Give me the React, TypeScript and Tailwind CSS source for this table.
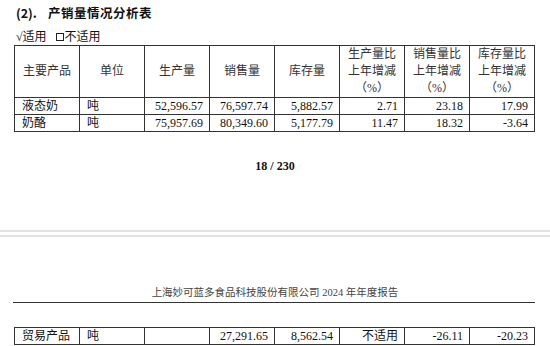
import React from 'react';

const serif = "font-['Liberation_Serif','Noto_Sans_CJK_SC',serif]";

const rows = [
  ['液态奶', '吨', '52,596.57', '76,597.74', '5,882.57', '2.71', '23.18', '17.99'],
  ['奶酪', '吨', '75,957.69', '80,349.60', '5,177.79', '11.47', '18.32', '-3.64'],
];

const cell = 'border border-[#333] text-[12px] leading-[15px] h-[17px] p-0 text-[#111]';

const DataRow: React.FC<{ r: string[] }> = ({ r }) => (
  <tr>
    {r.map((v, i) => (
      <td key={i} className={`${cell} ${i < 2 ? 'text-left pl-[7px]' : 'text-right pr-[6px]'}`}>
        {v}
      </td>
    ))}
  </tr>
);

const Head: React.FC<{ lines: string[] }> = ({ lines }) => (
  <th className="border border-[#333] h-[48px] p-0 font-normal text-[12px] leading-[17px] text-[#333] text-center">
    {lines.map((l, i) => (
      <div key={i}>{l}</div>
    ))}
  </th>
);

const Cols = () => (
  <colgroup>
    {Array.from({ length: 8 }).map((_, i) => (
      <col key={i} className="w-[65px]" />
    ))}
  </colgroup>
);

export default function App() {
  return (
    <div className={`w-[550px] h-[346px] bg-white overflow-hidden ${serif} text-black`}>
      <div className="pt-[4px] pl-[16px] h-[22px] flex text-[12.5px] leading-[18px] font-bold font-['Noto_Sans_CJK_SC',sans-serif] text-[#111]">
        <span className="w-[32px]">(2).</span>
        <span className="tracking-[0.5px]">产销量情况分析表</span>
      </div>
      <div className="mt-[7px] pl-[16px] h-[16px] flex items-center text-[12px] leading-[16px] text-[#111]">
        <span>√适用</span>
        <span className="ml-[9px] mr-[1px] inline-block w-[8px] h-[8px] border border-[#222]" />
        <span>不适用</span>
      </div>

      <table className="ml-[14px] w-[521px] table-fixed border-collapse">
        <Cols />
        <thead>
          <tr>
            <Head lines={['主要产品']} />
            <Head lines={['单位']} />
            <Head lines={['生产量']} />
            <Head lines={['销售量']} />
            <Head lines={['库存量']} />
            <Head lines={['生产量比', '上年增减', '（%）']} />
            <Head lines={['销售量比', '上年增减', '（%）']} />
            <Head lines={['库存量比', '上年增减', '（%）']} />
          </tr>
        </thead>
        <tbody>
          {rows.map((r, i) => (
            <DataRow key={i} r={r} />
          ))}
        </tbody>
      </table>

      <div className="mt-[26px] h-[16px] text-center text-[12px] leading-[16px] font-bold text-[#111]">
        18 / 230
      </div>

      {/* page gap */}
      <div className="mt-[56px] h-[2px] bg-[#e2e2e2]" />
      <div className="mt-[3px] h-[2px] bg-[#e2e2e2]" />

      <div className="mt-[49px] h-[14px] text-center text-[10.5px] leading-[14px] text-[#444]">
        上海妙可蓝多食品科技股份有限公司 2024 年年度报告
      </div>
      <div className="mt-[2px] ml-[13px] w-[522px] h-px bg-[#333]" />

      <table className="mt-[24px] ml-[14px] w-[521px] table-fixed border-collapse">
        <Cols />
        <tbody>
          <DataRow r={['贸易产品', '吨', '', '27,291.65', '8,562.54', '不适用', '-26.11', '-20.23']} />
        </tbody>
      </table>
    </div>
  );
}
